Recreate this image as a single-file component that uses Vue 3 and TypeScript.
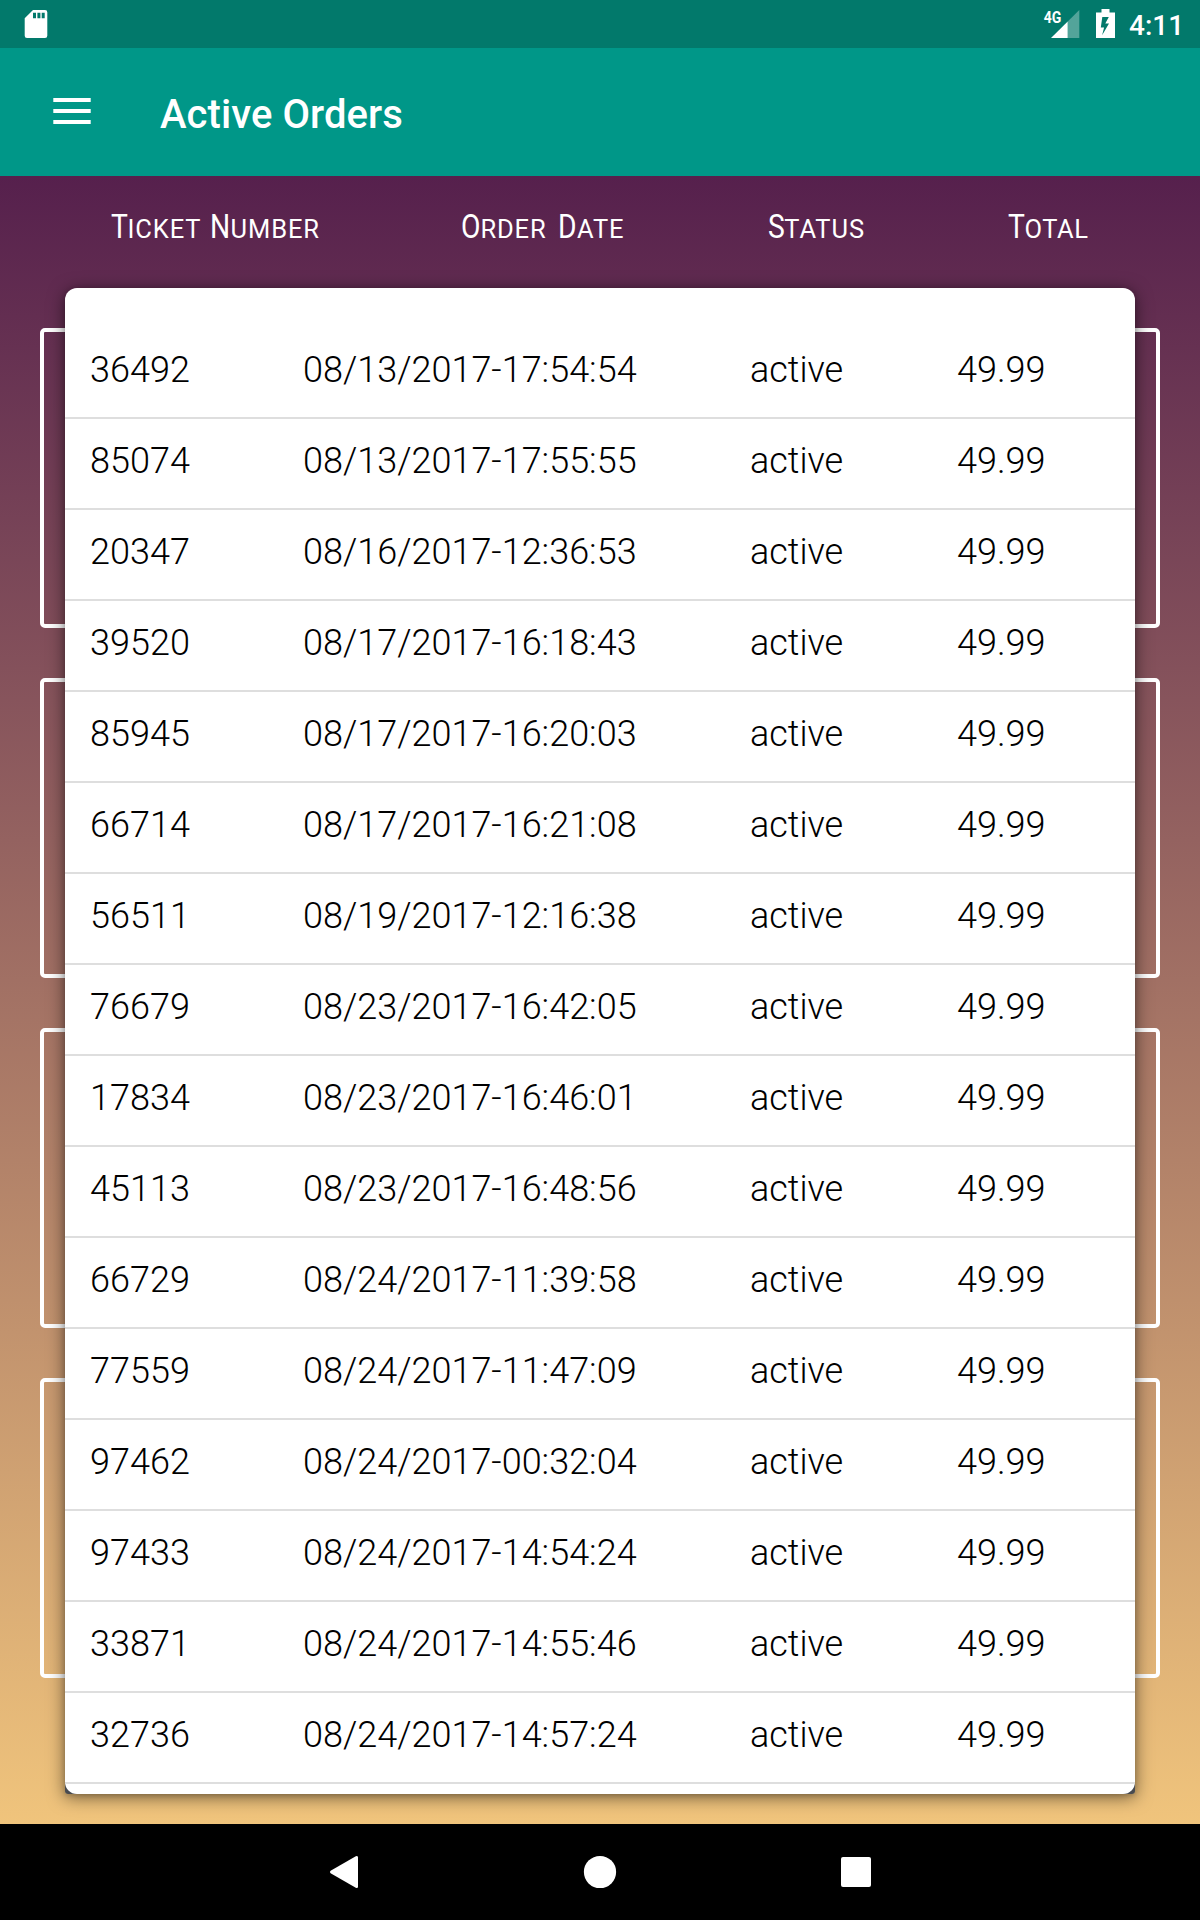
<script setup lang="ts">
interface Order {
  ticket: string
  date: string
  status: string
  total: string
}

interface Column {
  key: string
  words: string[]
}

const columns: Column[] = [
  { key: 'ticket', words: ['Ticket', 'Number'] },
  { key: 'date', words: ['Order', 'Date'] },
  { key: 'status', words: ['Status'] },
  { key: 'total', words: ['Total'] },
]

const source: [string, string][] = [
  ['36492', '08/13/2017-17:54:54'],
  ['85074', '08/13/2017-17:55:55'],
  ['20347', '08/16/2017-12:36:53'],
  ['39520', '08/17/2017-16:18:43'],
  ['85945', '08/17/2017-16:20:03'],
  ['66714', '08/17/2017-16:21:08'],
  ['56511', '08/19/2017-12:16:38'],
  ['76679', '08/23/2017-16:42:05'],
  ['17834', '08/23/2017-16:46:01'],
  ['45113', '08/23/2017-16:48:56'],
  ['66729', '08/24/2017-11:39:58'],
  ['77559', '08/24/2017-11:47:09'],
  ['97462', '08/24/2017-00:32:04'],
  ['97433', '08/24/2017-14:54:24'],
  ['33871', '08/24/2017-14:55:46'],
  ['32736', '08/24/2017-14:57:24'],
]

const orders: Order[] = source.map(([ticket, date]) => ({
  ticket,
  date,
  status: 'active',
  total: '49.99',
}))
</script>

<template>
  <div class="screen">
    <div class="status-bar">
      <svg class="sd" width="24" height="30" viewBox="24 9 24 30">
        <path
          fill="#fff"
          fill-rule="evenodd"
          d="M33 10H45a2.3 2.3 0 0 1 2.3 2.3V35.700a2.300 2.300 0 0 1-2.300 2.300H27a2.300 2.300 0 0 1-2.300-2.300V18.200zM33 12.800v5.500h3v-5.500zM37.400 12.800v5.500h3v-5.500zM41.700 12.800v5.500h3v-5.500z"
        />
      </svg>
      <div class="indicators">
        <svg width="38" height="32" viewBox="1043 8 38 32">
          <path fill="#fff" fill-opacity=".32" d="M1067.700 21.600L1079.300 10V38H1067.700z" />
          <path fill="#fff" d="M1051 38L1067.700 21.400V38z" />
          <text x="1043.700" y="22.800" class="network" textLength="17.600" lengthAdjust="spacingAndGlyphs">4G</text>
        </svg>
        <svg class="battery" width="21" height="32" viewBox="1095 8 21 32">
          <path
            fill="#fff"
            fill-rule="evenodd"
            d="M1101.500 9h8v3.500h5.500V38h-19V12.500h5.500zM1102.300 17l-1.500 10.600h3.300l-2 7.700L1109 23.400h-3.700l3.500-6.400z"
          />
        </svg>
        <span class="clock">4:11</span>
      </div>
    </div>

    <header class="app-bar">
      <svg class="menu" width="38" height="26" viewBox="0 0 38 26">
        <path fill="#fff" d="M.3 0h37.400v4H.3zM.3 11h37.400v4H.3zM.3 22h37.400v4H.3z" />
      </svg>
      <h1>Active Orders</h1>
    </header>

    <main class="content">
      <div class="column-heads">
        <div v-for="column in columns" :key="column.key" class="head" :class="column.key">
          <span v-for="word in column.words" :key="word" class="word"><span class="cap">{{ word[0] }}</span>{{ word.slice(1) }}</span>
        </div>
      </div>

      <div class="stage">
        <div class="frames">
          <div v-for="n in 4" :key="n" class="frame"></div>
        </div>
        <section class="sheet">
          <div class="list">
            <div v-for="order in orders" :key="order.ticket" class="row">
              <span>{{ order.ticket }}</span>
              <span>{{ order.date }}</span>
              <span>{{ order.status }}</span>
              <span>{{ order.total }}</span>
            </div>
          </div>
        </section>
      </div>
    </main>

    <nav class="nav-bar">
      <svg width="32" height="34" viewBox="328 1855 32 34">
        <path fill="#fff" d="M330.600 1870.800L355.800 1856.300Q358 1855.200 358 1857.600V1886.400Q358 1888.800 355.800 1887.700L330.600 1873.200Q329.200 1872 330.600 1870.800z" />
      </svg>
      <svg width="34" height="34" viewBox="0 0 34 34"><circle cx="17" cy="17" r="16.100" fill="#fff" /></svg>
      <svg width="32" height="34" viewBox="0 0 32 34"><rect x="1" y="2" width="30" height="30" rx="2" fill="#fff" /></svg>
    </nav>
  </div>
</template>

<style>
body {
  margin: 0;
}
</style>

<style scoped>
.screen {
  width: 1200px;
  height: 1920px;
  display: flex;
  flex-direction: column;
  overflow: hidden;
  font-family: Roboto, "Liberation Sans", sans-serif;
}

.status-bar {
  height: 48px;
  background: #02796b;
  display: flex;
  justify-content: space-between;
  box-sizing: border-box;
  padding: 8px 19px 8px 24px;
}

.sd {
  margin-top: 1px;
}

.indicators {
  display: flex;
  color: #fff;
}

.network {
  font: 700 17px Roboto, sans-serif;
  fill: #fff;
}

.battery {
  margin-left: 14px;
}

.clock {
  width: 52px;
  margin-left: 13px;
  font-size: 28px;
  font-weight: 500;
  line-height: 36px;
  white-space: nowrap;
}

.app-bar {
  height: 128px;
  background: #009788;
  display: flex;
  align-items: flex-start;
}

.menu {
  margin: 50px 0 0 53px;
}

h1 {
  margin: 43px 0 0 69px;
  color: #fff;
  font-size: 40px;
  font-weight: 500;
  line-height: 47px;
  letter-spacing: 0.08px;
}

.content {
  height: 1648px;
  background: linear-gradient(#56204d, #f0c47c);
}

.column-heads {
  height: 112px;
  display: grid;
  grid-template-columns: 350px 307px 240px 1fr;
  padding-left: 110.5px;
  box-sizing: border-box;
  color: #fff;
  font-family: Roboto, "Open Sans", sans-serif;
  font-size: 25.5px;
  line-height: 44px;
}

.head {
  display: flex;
  padding-top: 29px;
  gap: 11.5px;
}

.head.ticket {
  gap: 8.5px;
}

.word {
  display: block;
  text-transform: uppercase;
  white-space: nowrap;
  letter-spacing: 0.9px;
}

.total .word {
  letter-spacing: 0.6px;
}

.cap {
  display: inline-block;
  margin-right: -2.5px;
  font-size: 32.5px;
  letter-spacing: 0;
  transform: scaleX(0.87);
  transform-origin: left;
}

.stage {
  display: grid;
  height: 1536px;
}

.frames,
.sheet {
  grid-area: 1 / 1;
}

.frames {
  display: flex;
  flex-direction: column;
  gap: 50px;
  padding: 40px 40px 0;
}

.frame {
  height: 300px;
  box-sizing: border-box;
  border: 4px solid #fff;
  border-radius: 5px;
}

.sheet {
  position: relative;
  width: 1070px;
  height: 1506px;
  margin-left: 65px;
  background: linear-gradient(transparent 50%, #484b50 50%);
  border-radius: 12px 12px 3px 3px;
  box-shadow: 0 3px 17px rgba(0, 0, 0, 0.55), 0 1px 5px rgba(0, 0, 0, 0.15);
}

.list {
  height: 100%;
  box-sizing: border-box;
  padding-top: 40px;
  background: #fff;
  border-radius: 12px;
  overflow: hidden;
}

.row {
  height: 91px;
  box-sizing: border-box;
  border-bottom: 2px solid #dedede;
  display: grid;
  grid-template-columns: 213px 447px 207px 1fr;
  padding: 21px 0 0 25px;
  color: #000;
  font-size: 36px;
  font-weight: 300;
  line-height: 43px;
}

.nav-bar {
  height: 96px;
  background: #000;
  display: flex;
  justify-content: space-between;
  align-items: center;
  padding: 0 328px;
}
</style>
